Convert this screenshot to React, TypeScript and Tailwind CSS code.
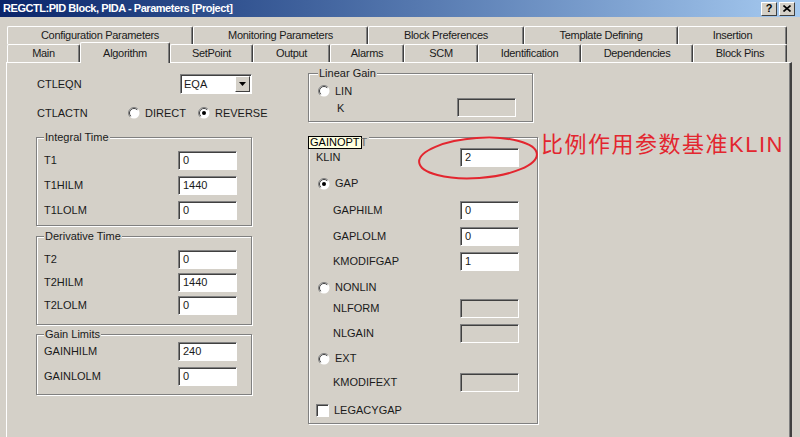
import * as React from "react";

type TabItem = { label: string; w: string; selected?: boolean };

const TOP_TABS: TabItem[] = [
  { label: "Configuration Parameters", w: "w-[186px]" },
  { label: "Monitoring Parameters", w: "w-[175px]" },
  { label: "Block Preferences", w: "w-[156px]" },
  { label: "Template Defining", w: "w-[154px]" },
  { label: "Insertion", w: "w-[109px]" },
];

const BOTTOM_TABS: TabItem[] = [
  { label: "Main", w: "w-[73px]" },
  { label: "Algorithm", w: "w-[90px]", selected: true },
  { label: "SetPoint", w: "w-[83px]" },
  { label: "Output", w: "w-[77px]" },
  { label: "Alarms", w: "w-[74px]" },
  { label: "SCM", w: "w-[74px]" },
  { label: "Identification", w: "w-[103px]" },
  { label: "Dependencies", w: "w-[112px]" },
  { label: "Block Pins", w: "w-[94px]" },
];

function Tab({ item }: { item: TabItem }) {
  if (item.selected) {
    return (
      <div
        className={`${item.w} relative z-10 -mt-[2px] h-[21px] flex justify-center pt-[2px] bg-[#d4d0c8] border-t border-l border-white border-r border-r-[#404040] shadow-[inset_-1px_0_0_#808080] rounded-t-[2px]`}
      >
        {item.label}
      </div>
    );
  }
  return (
    <div
      className={`${item.w} h-full flex items-center justify-center border-t border-l border-white border-r border-r-[#404040] shadow-[inset_-1px_0_0_#808080] rounded-t-[2px]`}
    >
      {item.label}
    </div>
  );
}

function Field({ value, disabled }: { value?: string; disabled?: boolean }) {
  return (
    <div
      className={`w-[59px] h-[19px] pl-[4px] flex items-center border border-t-[#808080] border-l-[#808080] border-r-white border-b-white shadow-[inset_1px_1px_0_#404040] ${
        disabled ? "bg-[#d4d0c8]" : "bg-white"
      }`}
    >
      {value}
    </div>
  );
}

function Radio({ checked }: { checked?: boolean }) {
  return (
    <svg width="12" height="12" viewBox="0 0 12 12" className="shrink-0">
      <circle cx="6" cy="6" r="5.5" fill="#fff" />
      <path d="M2.1 9.9 A5.5 5.5 0 0 1 9.9 2.1" fill="none" stroke="#808080" strokeWidth="1" />
      <path d="M2.8 9.2 A4.5 4.5 0 0 1 9.2 2.8" fill="none" stroke="#404040" strokeWidth="1" />
      {checked && <circle cx="6" cy="6" r="2" fill="#000" />}
    </svg>
  );
}

function RadioLabel({ label, checked }: { label: string; checked?: boolean }) {
  return (
    <div className="flex items-center gap-[5px] shrink-0">
      <Radio checked={checked} />
      <span>{label}</span>
    </div>
  );
}

function Row({ label, value, disabled, className }: { label: string; value?: string; disabled?: boolean; className?: string }) {
  return (
    <div className={`flex items-center justify-between h-[19px] ${className ?? ""}`}>
      <span>{label}</span>
      <Field value={value} disabled={disabled} />
    </div>
  );
}

const fieldsetCls =
  "border border-[#808080] shadow-[inset_1px_1px_0_#fff,1px_1px_0_#fff]";
const legendCls = "px-[1px] leading-[13px] bg-[#d4d0c8]";

export default function App() {
  return (
    <div className="relative w-[800px] h-[437px] overflow-hidden bg-[#d4d0c8] flex flex-col text-[11px] text-[#1a1a1a] font-['Liberation_Sans',Arial,sans-serif]">
      {/* title bar */}
      <div className="h-[17px] shrink-0 flex items-center justify-between pl-[3px] pr-[5px] bg-gradient-to-r from-[#0a246a] to-[#a6caf0]">
        <span className="font-bold text-white tracking-[-0.45px]">
          REGCTL:PID Block, PIDA - Parameters [Project]
        </span>
        <div className="flex gap-[2px]">
          <div className="w-[16px] h-[14px] flex items-center justify-center bg-[#d4d0c8] border border-t-white border-l-white border-r-[#404040] border-b-[#404040] font-bold text-black leading-none">
            ?
          </div>
          <div className="w-[16px] h-[14px] flex items-center justify-center bg-[#d4d0c8] border border-t-white border-l-white border-r-[#404040] border-b-[#404040]">
            <svg width="8" height="7" viewBox="0 0 8 7">
              <path d="M0.5 0.5 L7.5 6.5 M7.5 0.5 L0.5 6.5" stroke="#000" strokeWidth="1.6" />
            </svg>
          </div>
        </div>
      </div>

      {/* tabs */}
      <div className="pt-[9px] pl-[7px] shrink-0 tracking-[-0.3px]">
        <div className="flex h-[18px]">
          {TOP_TABS.map((t) => (
            <Tab key={t.label} item={t} />
          ))}
        </div>
        <div className="flex h-[18px]">
          {BOTTOM_TABS.map((t) => (
            <Tab key={t.label} item={t} />
          ))}
        </div>
      </div>

      {/* page */}
      <div className="ml-[6px] w-[786px] flex-1 border-t border-l border-white border-r-2 border-r-[#404040] shadow-[inset_-1px_0_0_#808080] pt-[4px] pl-[29px] flex gap-[56px] items-start">
        {/* left column */}
        <div className="w-[216px] pt-[7px] flex flex-col">
          <div className="flex items-center justify-between h-[20px] pl-[1px]">
            <span>CTLEQN</span>
            <div className="w-[72px] h-[20px] flex items-center justify-between bg-white border border-t-[#808080] border-l-[#808080] border-r-white border-b-white shadow-[inset_1px_1px_0_#404040] pl-[3px] pr-[1px]">
              <span>EQA</span>
              <div className="w-[15px] h-[16px] flex items-center justify-center bg-[#d4d0c8] border border-t-white border-l-white border-r-[#404040] border-b-[#404040]">
                <svg width="7" height="4" viewBox="0 0 7 4">
                  <path d="M0 0 H7 L3.5 4 Z" fill="#000" />
                </svg>
              </div>
            </div>
          </div>

          <div className="flex items-center h-[18px] mt-[10px] pl-[1px]">
            <span className="w-[91px] shrink-0">CTLACTN</span>
            <RadioLabel label="DIRECT" />
            <div className="ml-[12px] shrink-0">
              <RadioLabel label="REVERSE" checked />
            </div>
          </div>

          <fieldset className={`${fieldsetCls} mt-[9px] pl-[7px] pr-[14px] pt-[7px] pb-[5px] flex flex-col gap-[6px]`}>
            <legend className={legendCls}>Integral Time</legend>
            <Row label="T1" value="0" />
            <Row label="T1HILM" value="1440" />
            <Row label="T1LOLM" value="0" />
          </fieldset>

          <fieldset className={`${fieldsetCls} mt-[4px] pl-[7px] pr-[14px] pt-[7px] pb-[9px] flex flex-col gap-[4px]`}>
            <legend className={legendCls}>Derivative Time</legend>
            <Row label="T2" value="0" />
            <Row label="T2HILM" value="1440" />
            <Row label="T2LOLM" value="0" />
          </fieldset>

          <fieldset className={`${fieldsetCls} mt-[3px] pl-[7px] pr-[14px] pt-[1px] pb-[8px] flex flex-col gap-[6px]`}>
            <legend className={legendCls}>Gain Limits</legend>
            <Row label="GAINHILM" value="240" />
            <Row label="GAINLOLM" value="0" />
          </fieldset>
        </div>

        {/* right column */}
        <div className="w-[230px] flex flex-col">
          <fieldset className={`${fieldsetCls} w-[225px] pl-[9px] pr-[16px] pt-[4px] pb-[4px] flex flex-col`}>
            <legend className={legendCls}>Linear Gain</legend>
            <div className="h-[14px] flex items-center">
              <RadioLabel label="LIN" />
            </div>
            <div className="flex items-center justify-between h-[20px] -mt-[1px] pl-[19px]">
              <span className="pt-[3px]">K</span>
              <Field disabled />
            </div>
          </fieldset>

          <fieldset className={`${fieldsetCls} mt-[9px] pl-[7px] pr-[18px] pt-[4px] pb-[3px] flex flex-col`}>
            <legend className="-ml-[8px] pr-[2px] h-[13px] bg-[#d4d0c8]">
              <span className="relative top-[5px] z-10 flex items-center">
                <span className="h-[13px] px-[1px] flex items-center bg-[#ffffe1] border border-black leading-none text-black">
                  GAINOPT
                </span>
                <span className="leading-none text-[#666] -ml-[1px]">T</span>
              </span>
            </legend>
            <Row label="KLIN" value="2" />
            <div className="h-[19px] mt-[7px] flex items-center pl-[2px]">
              <RadioLabel label="GAP" checked />
            </div>
            <Row label="GAPHILM" value="0" className="mt-[8px] pl-[17px]" />
            <Row label="GAPLOLM" value="0" className="mt-[7px] pl-[17px]" />
            <Row label="KMODIFGAP" value="1" className="mt-[6px] pl-[17px]" />
            <div className="h-[19px] mt-[7px] flex items-center pl-[2px]">
              <RadioLabel label="NONLIN" />
            </div>
            <Row label="NLFORM" disabled className="mt-[2px] pl-[17px]" />
            <Row label="NLGAIN" disabled className="mt-[6px] pl-[17px]" />
            <div className="h-[19px] mt-[6px] flex items-center pl-[2px]">
              <RadioLabel label="EXT" />
            </div>
            <Row label="KMODIFEXT" disabled className="mt-[5px] pl-[17px]" />
            <div className="h-[19px] mt-[9px] flex items-center gap-[5px]">
              <div className="w-[13px] h-[13px] bg-white border border-t-[#808080] border-l-[#808080] border-r-white border-b-white shadow-[inset_1px_1px_0_#404040]" />
              <span>LEGACYGAP</span>
            </div>
          </fieldset>
        </div>
      </div>

      {/* red annotation */}
      <svg className="absolute left-[412px] top-[132px]" width="134" height="54" viewBox="0 0 134 54">
        <ellipse cx="66" cy="26" rx="59" ry="20" fill="none" stroke="#e3262f" strokeWidth="2" transform="rotate(-4 66 26)" />
      </svg>
      <div className="absolute left-[541px] top-[132px] text-[22px] leading-[26px] text-[#e3262f] font-['Liberation_Sans','Noto_Sans_CJK_SC',sans-serif] tracking-[1.5px]">
        比例作用参数基准KLIN
      </div>
    </div>
  );
}
